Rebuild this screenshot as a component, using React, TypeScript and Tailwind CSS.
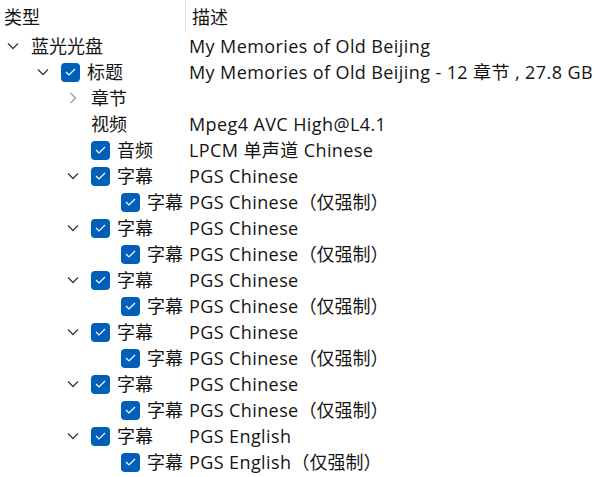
import React from 'react'

type Row = {
    level: number
    label: string
    desc?: string
    note?: string
    chevron?: 'open' | 'closed'
    check?: boolean
}

const subs = (lang: string): Row[] => [
    { level: 2, label: '字幕', desc: `PGS ${lang}`, chevron: 'open', check: true },
    { level: 3, label: '字幕', desc: `PGS ${lang}`, note: '（仅强制）', check: true },
]

const rows: Row[] = [
    { level: 0, label: '蓝光光盘', desc: 'My Memories of Old Beijing', chevron: 'open' },
    { level: 1, label: '标题', desc: 'My Memories of Old Beijing - 12 章节 , 27.8 GB', chevron: 'open', check: true },
    { level: 2, label: '章节', chevron: 'closed' },
    { level: 2, label: '视频', desc: 'Mpeg4 AVC High@L4.1' },
    { level: 2, label: '音频', desc: 'LPCM 单声道 Chinese', check: true },
    ...subs('Chinese'),
    ...subs('Chinese'),
    ...subs('Chinese'),
    ...subs('Chinese'),
    ...subs('Chinese'),
    ...subs('English'),
]

const indent = ['pl-[4px]', 'pl-[34px]', 'pl-[64px]', 'pl-[94px]']

function Chevron({ kind }: { kind: 'open' | 'closed' }) {
    if (kind === 'open') {
        return (
            <svg width="12" height="8" viewBox="0 0 12 8" className="text-[#3a3a3a]">
                <path d="M1 1.5 L6 6.5 L11 1.5" fill="none" stroke="currentColor" strokeWidth="1.3" />
            </svg>
        )
    }
    return (
        <svg width="8" height="12" viewBox="0 0 8 12" className="text-[#9a9a9a]">
            <path d="M1.5 1 L6.5 6 L1.5 11" fill="none" stroke="currentColor" strokeWidth="1.3" />
        </svg>
    )
}

function Checkbox() {
    return (
        <div className="mr-[7px] flex h-[19px] w-[19px] shrink-0 items-center justify-center rounded-[4px] bg-[#005fb8]">
            <svg width="11" height="8" viewBox="0 0 11 8">
                <path d="M1 4 L4 7 L10 1" fill="none" stroke="white" strokeWidth="1.2" />
            </svg>
        </div>
    )
}

export default function App() {
    return (
        <div
            className="h-[477px] w-[605px] overflow-hidden bg-white text-[18px] text-[#141414]"
            style={{ fontFamily: '"Open Sans", "Noto Sans CJK SC", sans-serif' }}
        >
            <div className="flex h-[33px] items-center">
                <div className="w-[185px] pl-[4px] leading-none">类型</div>
                <div className="flex h-full items-center border-l border-[#e3e3e3] pl-[6px] leading-none">描述</div>
            </div>
            {rows.map((r, i) => (
                <div key={i} className="flex h-[26px] items-center whitespace-nowrap">
                    <div className={`flex w-[185px] shrink-0 items-center ${indent[r.level]}`}>
                        <div className="flex w-[27px] shrink-0 items-center justify-center pr-[9px]">
                            {r.chevron && <Chevron kind={r.chevron} />}
                        </div>
                        {r.check && <Checkbox />}
                        <span>{r.label}</span>
                    </div>
                    <div className="pl-[4px]">
                        <span className="tracking-[0.4px]">{r.desc}</span>
                        {r.note && <span>{r.note}</span>}
                    </div>
                </div>
            ))}
        </div>
    )
}
